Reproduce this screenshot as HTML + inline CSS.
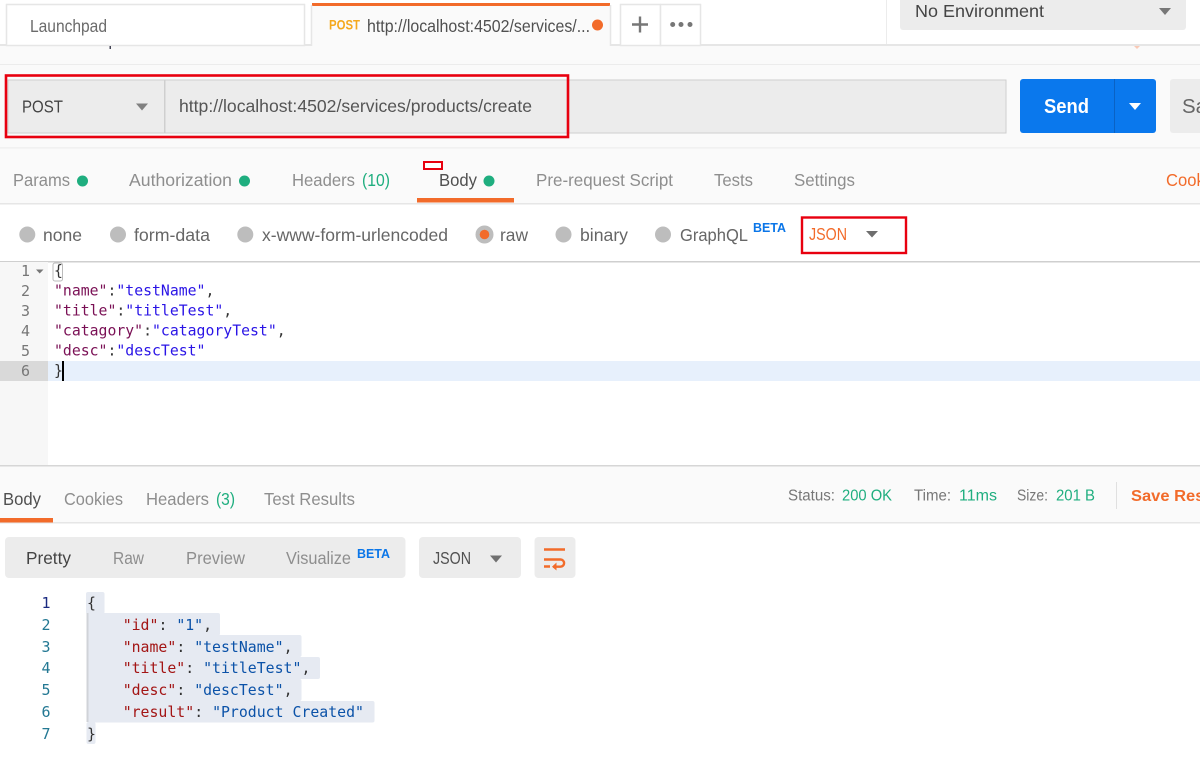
<!DOCTYPE html>
<html lang="en"><head><meta charset="utf-8"><title>Postman</title>
<style>
html,body{margin:0;padding:0;background:#fff;width:1200px;height:766px;overflow:hidden}
svg{display:block;filter:blur(.3px)}
text{font-family:"Liberation Sans",sans-serif;font-size:17.5px;fill:#8e8e8e;white-space:pre}
.d{fill:#505050}.g{fill:#1fae7f}.o{fill:#f26b2a}.b{fill:#0b76e8;font-size:13px;font-weight:bold}
.m text,text.m{font-family:"DejaVu Sans Mono",monospace;font-size:14.8px}
.r text{font-size:14.85px}
.k{fill:#7a1055}.s{fill:#2a14e6}.p{fill:#333}.n{fill:#777;font-family:"DejaVu Sans Mono",monospace;font-size:15px}
.k2{fill:#a31515}.s2{fill:#0b52a8}.n2{fill:#237893;font-family:"DejaVu Sans Mono",monospace;font-size:15px}
</style></head><body>
<svg width="1200" height="766" viewBox="0 0 1200 766" xmlns="http://www.w3.org/2000/svg">
<rect width="1200" height="766" fill="#fff"/>
<!-- top -->
<rect x="0" y="45" width="1200" height="103" fill="#fafafa"/>
<rect x="0" y="44" width="1200" height="2" fill="#e6e6e6"/>
<rect x="0" y="64" width="1200" height="1" fill="#ececec"/>
<rect x="0" y="147.500" width="1200" height="1" fill="#e8e8e8"/>
<rect x="6.500" y="4.500" width="298" height="41" fill="#fff" stroke="#e6e6e6" stroke-width="1.500"/>
<rect x="312" y="3" width="298" height="43" fill="#fafafa"/>
<rect x="312" y="3" width="298" height="3" fill="#f26b2a"/>
<path d="M311.500 46V5M610.500 46V5" stroke="#e6e6e6" stroke-width="1.500" fill="none"/>
<rect x="620.500" y="4.500" width="40" height="41" fill="#fff" stroke="#e6e6e6" stroke-width="1.500"/>
<rect x="660.500" y="4.500" width="40" height="41" fill="#fff" stroke="#e6e6e6" stroke-width="1.500"/>
<text x="30" y="32" style="fill:#6b6b6b" textLength="77" lengthAdjust="spacingAndGlyphs">Launchpad</text>
<text x="329" y="29.500" style="fill:#f5a81c;font-size:13.500px;font-weight:bold" textLength="31" lengthAdjust="spacingAndGlyphs">POST</text>
<text x="367" y="32" class="d" textLength="223" lengthAdjust="spacingAndGlyphs">http://localhost:4502/services/...</text>
<circle cx="597.500" cy="25" r="5.500" fill="#f26b2a"/>
<path d="M640 16.500V32.500M632 24.500H648" stroke="#777" stroke-width="2.400"/>
<circle cx="672.700" cy="24.500" r="2.500" fill="#777"/><circle cx="681" cy="24.500" r="2.500" fill="#777"/><circle cx="690" cy="24.500" r="2.500" fill="#777"/>
<rect x="886" y="0" width="1" height="44" fill="#ececec"/>
<rect x="900" y="-6" width="286" height="36" rx="3" fill="#ececec"/>
<text x="915" y="17" style="fill:#444" textLength="129" lengthAdjust="spacingAndGlyphs">No Environment</text>
<path d="M1159 8H1171L1165 15Z" fill="#777"/>
<rect x="109.500" y="46" width="1.500" height="3" fill="#445"/>
<path d="M1134 46H1140L1137 49Z" fill="#f9c9b5"/>
<!-- url bar -->
<rect x="8" y="80" width="998" height="53" fill="#ececec" stroke="#cfcfcf"/>
<rect x="164" y="80" width="1.500" height="53" fill="#cfcfcf"/>
<text x="22" y="112.500" style="fill:#444" textLength="41" lengthAdjust="spacingAndGlyphs">POST</text>
<path d="M136 103.500H148L142 110.500Z" fill="#808080"/>
<text x="179" y="112" style="fill:#555" textLength="353" lengthAdjust="spacingAndGlyphs">http://localhost:4502/services/products/create</text>
<rect x="6" y="75.500" width="562" height="61.500" fill="none" stroke="#e8000f" stroke-width="2.600"/>
<rect x="1020" y="79" width="136" height="54" rx="3" fill="#0a78ed"/>
<rect x="1114" y="79" width="1" height="54" fill="#0a62c4"/>
<text x="1044" y="113" style="fill:#fff;font-size:20px;font-weight:bold" textLength="45" lengthAdjust="spacingAndGlyphs">Send</text>
<path d="M1129 103H1141L1135 110Z" fill="#fff"/>
<rect x="1170" y="79" width="40" height="54" rx="3" fill="#ececec"/>
<text x="1182" y="113" style="font-size:20px;fill:#666" textLength="25" lengthAdjust="spacingAndGlyphs">Sa</text>
<!-- req tabs -->
<rect x="0" y="149" width="1200" height="54" fill="#fafafa"/>
<rect x="0" y="203" width="1200" height="1.500" fill="#e6e6e6"/>
<text x="13" y="186" textLength="57" lengthAdjust="spacingAndGlyphs">Params</text>
<circle cx="82.500" cy="181" r="5.500" fill="#1fae7f"/>
<text x="129" y="186" textLength="103" lengthAdjust="spacingAndGlyphs">Authorization</text>
<circle cx="244.500" cy="181" r="5.500" fill="#1fae7f"/>
<text x="292" y="186" textLength="63" lengthAdjust="spacingAndGlyphs">Headers</text>
<text x="362" y="186" class="g" textLength="28" lengthAdjust="spacingAndGlyphs">(10)</text>
<text x="439" y="186" class="d" textLength="38" lengthAdjust="spacingAndGlyphs">Body</text>
<circle cx="489" cy="181" r="5.500" fill="#1fae7f"/>
<text x="536" y="186" textLength="137" lengthAdjust="spacingAndGlyphs">Pre-request Script</text>
<text x="714" y="186" textLength="39" lengthAdjust="spacingAndGlyphs">Tests</text>
<text x="794" y="186" textLength="61" lengthAdjust="spacingAndGlyphs">Settings</text>
<text x="1166" y="186" class="o" textLength="60" lengthAdjust="spacingAndGlyphs">Cookies</text>
<rect x="417" y="198" width="97" height="4.500" fill="#f26b2a"/>
<rect x="424" y="162" width="18" height="7" fill="#fff" stroke="#e8000f" stroke-width="2"/>
<!-- radios -->
<g fill="#bdbdbd"><circle cx="27.300" cy="234.500" r="8"/><circle cx="118" cy="234.500" r="8"/><circle cx="245.300" cy="234.500" r="8"/><circle cx="484.500" cy="234.500" r="9"/><circle cx="563.500" cy="234.500" r="8"/><circle cx="663" cy="234.500" r="8"/></g>
<circle cx="484.500" cy="234.500" r="4.800" fill="#f26b2a"/>
<text x="43" y="241" style="fill:#666" textLength="39" lengthAdjust="spacingAndGlyphs">none</text>
<text x="134" y="241" style="fill:#666" textLength="76" lengthAdjust="spacingAndGlyphs">form-data</text>
<text x="262" y="241" style="fill:#666" textLength="186" lengthAdjust="spacingAndGlyphs">x-www-form-urlencoded</text>
<text x="500" y="241" style="fill:#666" textLength="28" lengthAdjust="spacingAndGlyphs">raw</text>
<text x="580" y="241" style="fill:#666" textLength="48" lengthAdjust="spacingAndGlyphs">binary</text>
<text x="680" y="241" style="fill:#666" textLength="68" lengthAdjust="spacingAndGlyphs">GraphQL</text>
<text x="753" y="232" class="b" textLength="33" lengthAdjust="spacingAndGlyphs">BETA</text>
<rect x="802" y="217.500" width="104" height="35.500" fill="none" stroke="#e8000f" stroke-width="2.400"/>
<text x="809" y="240" class="o" textLength="38" lengthAdjust="spacingAndGlyphs">JSON</text>
<path d="M866 231H878L872 237.500Z" fill="#6e6e6e"/>
<!-- editor -->
<rect x="0" y="261" width="1200" height="1.500" fill="#cfcfcf"/>
<rect x="0" y="262" width="48" height="203" fill="#f7f7f7"/>
<rect x="48" y="361" width="1152" height="20" fill="#e7f0fc"/>
<rect x="0" y="361" width="48" height="20" fill="#d9d9d9"/>
<text x="21" y="276" class="n">1</text><text x="21" y="296" class="n">2</text><text x="21" y="316" class="n">3</text><text x="21" y="336" class="n">4</text><text x="21" y="356" class="n">5</text><text x="21" y="376" class="n">6</text>
<path d="M36 269.500H43.500L39.700 273.500Z" fill="#777"/>
<rect x="53" y="263" width="9.500" height="18" rx="2" fill="none" stroke="#bbb"/>
<g class="m" xml:space="preserve">
<text x="54" y="275.500" class="p">{</text>
<text x="54" y="295.500"><tspan class="k">"name"</tspan><tspan class="p">:</tspan><tspan class="s">"testName"</tspan><tspan class="p">,</tspan></text>
<text x="54" y="315.500"><tspan class="k">"title"</tspan><tspan class="p">:</tspan><tspan class="s">"titleTest"</tspan><tspan class="p">,</tspan></text>
<text x="54" y="335.500"><tspan class="k">"catagory"</tspan><tspan class="p">:</tspan><tspan class="s">"catagoryTest"</tspan><tspan class="p">,</tspan></text>
<text x="54" y="355.500"><tspan class="k">"desc"</tspan><tspan class="p">:</tspan><tspan class="s">"descTest"</tspan></text>
<text x="54" y="375.500" class="p">}</text>
</g>
<rect x="62" y="361" width="2" height="20" fill="#000"/>
<!-- response bar -->
<rect x="0" y="465" width="1200" height="1.500" fill="#d6d6d6"/>
<rect x="0" y="466.500" width="1200" height="55.500" fill="#fafafa"/>
<rect x="0" y="522" width="1200" height="1.500" fill="#e6e6e6"/>
<rect x="0" y="518" width="53" height="4.500" fill="#f26b2a"/>
<text x="3" y="505" class="d" textLength="38" lengthAdjust="spacingAndGlyphs">Body</text>
<text x="64" y="505" textLength="59" lengthAdjust="spacingAndGlyphs">Cookies</text>
<text x="146" y="505" textLength="63" lengthAdjust="spacingAndGlyphs">Headers</text>
<text x="216" y="505" class="g" textLength="19" lengthAdjust="spacingAndGlyphs">(3)</text>
<text x="264" y="505" textLength="91" lengthAdjust="spacingAndGlyphs">Test Results</text>
<text x="788" y="500.500" style="fill:#777;font-size:15.500px" textLength="47" lengthAdjust="spacingAndGlyphs">Status:</text>
<text x="842" y="500.500" class="g" style="font-size:15.500px" textLength="50" lengthAdjust="spacingAndGlyphs">200 OK</text>
<text x="914" y="500.500" style="fill:#777;font-size:15.500px" textLength="37" lengthAdjust="spacingAndGlyphs">Time:</text>
<text x="959" y="500.500" class="g" style="font-size:15.500px" textLength="38" lengthAdjust="spacingAndGlyphs">11ms</text>
<text x="1017" y="500.500" style="fill:#777;font-size:15.500px" textLength="31" lengthAdjust="spacingAndGlyphs">Size:</text>
<text x="1056" y="500.500" class="g" style="font-size:15.500px" textLength="39" lengthAdjust="spacingAndGlyphs">201 B</text>
<rect x="1116" y="482" width="1" height="27" fill="#e0e0e0"/>
<text x="1131" y="501" class="o" style="font-weight:bold;font-size:16px" textLength="122" lengthAdjust="spacingAndGlyphs">Save Response</text>
<!-- response toolbar -->
<rect x="5" y="537" width="400.500" height="41" rx="4" fill="#ececec"/>
<rect x="419" y="537" width="102" height="41" rx="4" fill="#ececec"/>
<rect x="534.500" y="537" width="41" height="41" rx="4" fill="#ececec"/>
<text x="26" y="564" style="fill:#444" textLength="45" lengthAdjust="spacingAndGlyphs">Pretty</text>
<text x="113" y="564" textLength="31" lengthAdjust="spacingAndGlyphs">Raw</text>
<text x="186" y="564" textLength="59" lengthAdjust="spacingAndGlyphs">Preview</text>
<text x="286" y="564" textLength="65" lengthAdjust="spacingAndGlyphs">Visualize</text>
<text x="357" y="558" class="b" textLength="33" lengthAdjust="spacingAndGlyphs">BETA</text>
<text x="433" y="564" class="d" textLength="38" lengthAdjust="spacingAndGlyphs">JSON</text>
<path d="M490 555.500H502L496 562.500Z" fill="#707070"/>
<path d="M544 549.500H565M544 559.500H560.500a3.600 3.600 0 0 1 0 7.200H553M544 566.500H550" stroke="#f26b2a" stroke-width="2.400" fill="none"/>
<path d="M556.500 562.500L552 566.700L556.500 570.500Z" fill="#f26b2a"/>
<!-- response code -->
<g fill="#e6eaf2">
<rect x="86" y="592" width="18.500" height="22" rx="2"/>
<rect x="87" y="613" width="133" height="22.500" rx="2"/>
<rect x="87" y="635" width="214.500" height="22" rx="2"/>
<rect x="87" y="657" width="233" height="22" rx="2"/>
<rect x="87" y="679" width="214.500" height="22" rx="2"/>
<rect x="87" y="701" width="287.500" height="21.500" rx="2"/>
<rect x="86.500" y="722" width="9" height="22" rx="2"/>
</g>
<rect x="86.500" y="613" width="2" height="109" fill="#d0d3d8"/>
<text x="41.500" y="608" class="n2" style="fill:#1a2a80">1</text><text x="41.500" y="630" class="n2">2</text><text x="41.500" y="652" class="n2">3</text><text x="41.500" y="673" class="n2">4</text><text x="41.500" y="695" class="n2">5</text><text x="41.500" y="717" class="n2">6</text><text x="41.500" y="739" class="n2">7</text>
<g class="m r" xml:space="preserve">
<text x="87" y="608" class="p">{</text>
<text x="122.700" y="630"><tspan class="k2">"id"</tspan><tspan class="p">: </tspan><tspan class="s2">"1"</tspan><tspan class="p">,</tspan></text>
<text x="122.700" y="652"><tspan class="k2">"name"</tspan><tspan class="p">: </tspan><tspan class="s2">"testName"</tspan><tspan class="p">,</tspan></text>
<text x="122.700" y="673"><tspan class="k2">"title"</tspan><tspan class="p">: </tspan><tspan class="s2">"titleTest"</tspan><tspan class="p">,</tspan></text>
<text x="122.700" y="695"><tspan class="k2">"desc"</tspan><tspan class="p">: </tspan><tspan class="s2">"descTest"</tspan><tspan class="p">,</tspan></text>
<text x="122.700" y="717"><tspan class="k2">"result"</tspan><tspan class="p">: </tspan><tspan class="s2">"Product Created"</tspan></text>
<text x="87" y="739" class="p">}</text>
</g>
</svg>
</body></html>
